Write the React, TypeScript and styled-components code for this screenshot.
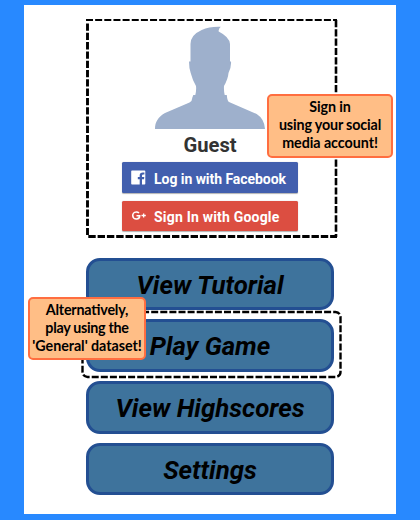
import React from "react";
import styled, { createGlobalStyle } from "styled-components";

const GlobalStyle = createGlobalStyle`
  * { box-sizing: border-box; }
  body { margin: 0; background: #2889ff; font-family: Roboto, sans-serif; }
`;

const Screen = styled.div`
  width: 420px;
  height: 520px;
  padding: 5px 24px 6px;
  background: #2889ff;
`;

const Card = styled.main`
  position: relative;
  height: 509px;
  padding: 14px 0 0 62px;
  background: #fff;
`;

const Profile = styled.section`
  position: relative;
  width: 252px;
  height: 219px;
  padding: 7px 0 0 36px;
`;

const Avatar = styled.svg`
  display: block;
  width: 112px;
  height: 103px;
  margin-left: 32px;
`;

const Name = styled.h1`
  width: 176px;
  height: 33px;
  margin: 0;
  font-size: 20.2px;
  font-weight: 700;
  line-height: 33px;
  text-align: center;
  color: #333;
`;

const LoginButton = styled.button<{ $color: string; $height: number; $gap?: number }>`
  display: flex;
  align-items: center;
  width: 176px;
  height: ${(p) => p.$height}px;
  margin: 0 0 ${(p) => p.$gap ?? 0}px;
  padding: 2px 0 0 9px;
  border: 0;
  border-radius: 1.5px;
  background: ${(p) => p.$color};
  box-shadow: 0 0.5px 1px rgba(0, 0, 0, 0.3);
  color: #fff;
  font: 700 14px/20px Roboto, sans-serif;
  white-space: nowrap;
`;

const LoginIcon = styled.svg`
  flex: none;
  width: 15px;
  height: 15px;
  margin: -2px 8px 0 0;
`;

const LoginLabel = styled.span<{ $spacing: number }>`
  letter-spacing: ${(p) => p.$spacing}px;
`;

const Menu = styled.nav`
  display: flex;
  flex-direction: column;
  gap: 9.4px;
  width: 248px;
  margin-top: 19.6px;
`;

const MenuButton = styled.button`
  height: 52.4px;
  padding: 1px 0 0;
  border: 3px solid #234f92;
  border-radius: 14px;
  background: #3e739c;
  color: #000;
  font: italic 700 25.8px/46px Roboto, sans-serif;
  white-space: nowrap;
`;

const Outline = styled.svg<{ $x: number; $y: number }>`
  position: absolute;
  left: ${(p) => p.$x}px;
  top: ${(p) => p.$y}px;
  overflow: visible;
  pointer-events: none;
`;

const Callout = styled.aside<{ $x: number; $y: number; $w: number; $h: number }>`
  position: absolute;
  left: ${(p) => p.$x}px;
  top: ${(p) => p.$y}px;
  width: ${(p) => p.$w}px;
  height: ${(p) => p.$h}px;
  display: flex;
  flex-direction: column;
  align-items: center;
  padding-top: 2px;
  border: 2px solid #ff6e40;
  border-radius: 5px;
  background: #ffbe86;
  color: #000;
  font: 700 14.3px/18px Lato, sans-serif;
  font-feature-settings: "liga" 1;
  white-space: nowrap;
`;

const CalloutLine = styled.span<{ $spacing: number }>`
  letter-spacing: ${(p) => p.$spacing}px;
`;

const menuItems = ["View Tutorial", "Play Game", "View Highscores", "Settings"];

export default function App() {
  return (
    <>
      <GlobalStyle />
      <Screen>
        <Card>
          <Profile>
            <Outline $x={0} $y={0} width="252" height="219" fill="none" stroke="#000">
              <path d="M0 1H251" strokeWidth="2" strokeDasharray="7 2.15" />
              <path d="M1.5 4.500V216" strokeWidth="2.9" strokeDasharray="7.3 2" />
              <path d="M250 1V218" strokeWidth="2.6" strokeDasharray="7.2 2.1" />
              <path d="M2.3 217.5H251" strokeWidth="2.8" strokeDasharray="7.4 1.9" />
            </Outline>
            <Avatar viewBox="0 0 112 103" fill="#9eb0cc">
              <path d="M1 103C1 96 4 91 11 87L35.500 76.500Q38.300 75 38.200 72L39.300 69H41.300Q42.500 64 42 60Q38.500 54 36.700 47Q35 42 35 35.500H36.500V18Q36.500 9 47.700 4Q56 .3 66.700 .8Q64.200 3 64.700 5.500Q75.500 11 76 18V35.500H77Q77.500 41 74.500 47Q74 53 70 60Q69.700 65 70.700 69H72.800Q73.300 75 75 76L102.700 88Q110.500 93 111 103Z" />
            </Avatar>
            <Name>Guest</Name>
            <LoginButton $color="#425fae" $height={31} $gap={8}>
              <LoginIcon viewBox="0 0 15 15">
                <path fill="#fff" d="M1 .5H13.500a.8.800 0 0 1 .8.800V13.700a.8.800 0 0 1-.8.800H11V9.200H13L13.300 7H11V5.700q0-1.100 1.200-1.100H13.400V2.600Q8.700 1.900 8.700 5.300V7H6.800V9.200H8.700V14.500H1a.8.800 0 0 1-.8-.8V1.300A.8.800 0 0 1 1 .5Z" />
              </LoginIcon>
              <LoginLabel $spacing={-0.05}>Log in with Facebook</LoginLabel>
            </LoginButton>
            <LoginButton $color="#dc4e41" $height={29.5}>
              <LoginIcon viewBox="0 0 15 15" fill="none" stroke="#fff">
                <path strokeWidth="1.6" d="M8 5Q6.700 3.800 5 4A3.500 3.500 0 0 0 5.500 11Q8.700 10.800 8.700 7.700H5.500" />
                <path strokeWidth="1.3" d="M10.500 7.500H14.800M12.650 5.400V9.600" />
              </LoginIcon>
              <LoginLabel $spacing={0.2}>Sign In with Google</LoginLabel>
            </LoginButton>
          </Profile>
          <Menu>
            {menuItems.map((label) => (
              <MenuButton key={label}>{label}</MenuButton>
            ))}
          </Menu>
          <Outline $x={58} $y={307} width="260" height="67" fill="none" stroke="#000">
            <rect x="0.5" y="0" width="258" height="65" rx="5" strokeWidth="2.4" strokeDasharray="7 2.1" />
          </Outline>
          <Callout $x={243} $y={88.5} $w={126} $h={64}>
            <CalloutLine $spacing={-0.1}>Sign in</CalloutLine>
            <CalloutLine $spacing={-0.15}>using your social</CalloutLine>
            <CalloutLine $spacing={-0.05}>media account!</CalloutLine>
          </Callout>
          <Callout $x={4} $y={292} $w={118} $h={63}>
            <CalloutLine $spacing={-0.2}>Alternatively,</CalloutLine>
            <CalloutLine $spacing={-0.3}>play using the</CalloutLine>
            <CalloutLine $spacing={-0.05}>'General' dataset!</CalloutLine>
          </Callout>
        </Card>
      </Screen>
    </>
  );
}
